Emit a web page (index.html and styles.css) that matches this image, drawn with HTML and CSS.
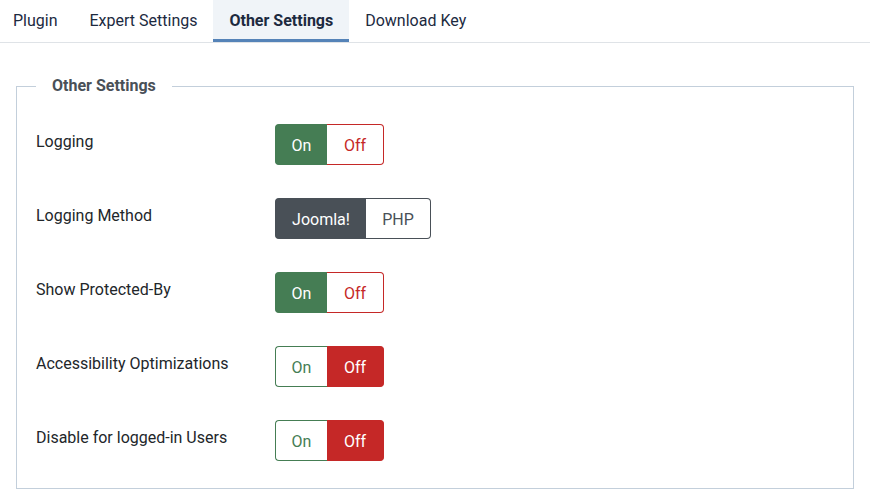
FILE: index.html
```html
<!DOCTYPE html>
<html>
<head>
<meta charset="utf-8">
<link rel="stylesheet" href="styles.css">
</head>
<body>
<nav class="tabs">
  <a class="tab">Plugin</a>
  <a class="tab">Expert Settings</a>
  <a class="tab active">Other Settings</a>
  <a class="tab">Download Key</a>
</nav>
<fieldset class="panel">
  <legend class="legend">Other Settings</legend>
  <div class="row">
    <div class="label">Logging</div>
    <div class="switch">
      <span class="btn on active">On</span><span class="btn off">Off</span>
    </div>
  </div>
  <div class="row">
    <div class="label">Logging Method</div>
    <div class="switch">
      <span class="btn dark active wide">Joomla!</span><span class="btn dark php">PHP</span>
    </div>
  </div>
  <div class="row">
    <div class="label">Show Protected-By</div>
    <div class="switch">
      <span class="btn on active">On</span><span class="btn off">Off</span>
    </div>
  </div>
  <div class="row">
    <div class="label">Accessibility Optimizations</div>
    <div class="switch">
      <span class="btn on">On</span><span class="btn off active">Off</span>
    </div>
  </div>
  <div class="row">
    <div class="label">Disable for logged-in Users</div>
    <div class="switch">
      <span class="btn on">On</span><span class="btn off active">Off</span>
    </div>
  </div>
</fieldset>
</body>
</html>
```
FILE: styles.css
```css
* { box-sizing: border-box; }
html, body { margin: 0; padding: 0; background: #fff; }
body {
  font-family: Roboto, "Liberation Sans", sans-serif;
  font-size: 16px;
  color: #22262a;
  width: 870px;
  height: 490px;
  overflow: hidden;
}
.tabs {
  display: flex;
  height: 43px;
  border-bottom: 1px solid #dfe3e7;
  padding-left: 0;
  margin-left: -3px;
}
.tab {
  display: flex;
  align-items: center;
  padding: 2px 16px 0;
  height: 42px;
  color: #1c2a3f;
  font-size: 16px;
  border-bottom: 3px solid transparent;
}
.tab.active {
  font-weight: 700;
  background: #f0f4f8;
  border-bottom-color: #5583b8;
}
.panel {
  margin: 31px 16px 0 16px;
  border: 1px solid #c3cfdb;
  padding: 26px 19px 26px 19px;
  height: 415px;
}
.legend {
  padding: 0 16px;
  font-weight: 700;
  color: #495057;
  font-size: 16px;
  line-height: 24px;
}
.row {
  display: flex;
  align-items: flex-start;
  margin-bottom: 33px;
}
.label {
  width: 239px;
  padding-top: 6px;
  line-height: 24px;
  color: #22262a;
}
.switch { display: flex; }
.btn {
  display: flex;
  align-items: center;
  justify-content: center;
  height: 41px;
  padding-top: 1px;
  font-size: 16px;
  border: 1px solid;
}
.btn.on {
  width: 52px;
  color: #457d54;
  border-color: #457d54;
  border-radius: 4px 0 0 4px;
  border-right: 0;
}
.btn.off {
  width: 57px;
  color: #c52827;
  border-color: #c52827;
  border-radius: 0 4px 4px 0;
  border-left: 0;
}
.btn.on.active { background: #457d54; color: #fff; }
.btn.off.active { background: #c52827; color: #fff; }
.btn.dark {
  color: #495057;
  border-color: #495057;
}
.btn.dark.wide {
  width: 91px;
  border-radius: 4px 0 0 4px;
  border-right: 0;
}
.btn.dark.php {
  width: 65px;
  border-radius: 0 4px 4px 0;
  border-left: 0;
}
.btn.dark.active { background: #495057; color: #fff; }
```
